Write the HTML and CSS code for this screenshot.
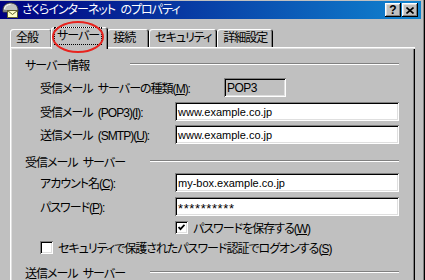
FILE: index.html
```html
<!DOCTYPE html>
<html lang="ja">
<head>
<meta charset="utf-8">
<title>さくらインターネット のプロパティ</title>
<link rel="stylesheet" href="styles.css">
</head>
<body>
<div class="window">
  <div class="titlebar">
    <svg class="app-icon" width="17" height="16" viewBox="0 0 17 16">
      <path d="M1 8 C1 3 5 1 8.5 1 C12 1 16 3 16 8 L16 10 L1 10 Z" fill="#c0c0c0" stroke="#404040" stroke-width="1"/>
      <path d="M2.5 7 C3 4 5.5 2.5 8.5 2.5" fill="none" stroke="#ffffff" stroke-width="1"/>
      <rect x="1.5" y="8" width="14" height="2" fill="#808080"/>
      <rect x="5.5" y="8.5" width="10" height="7" fill="#ffffc8" stroke="#606030" stroke-width="1"/>
      <path d="M5.5 8.5 L10.5 12.5 L15.5 8.5" fill="none" stroke="#606030" stroke-width="1"/>
    </svg>
    <span class="title">さくらインターネット のプロパティ</span>
    <div class="tb-buttons">
      <span class="tb-btn tb-help">?</span>
      <span class="tb-btn">
        <svg width="8" height="7" viewBox="0 0 8 7"><path d="M0.5 0.5 L7.5 6.5 M7.5 0.5 L0.5 6.5" stroke="#000" stroke-width="1.6"/></svg>
      </span>
    </div>
  </div>

  <div class="client">
    <div class="tabs">
      <div class="tab">全般</div>
      <div class="tab active"><span class="focus">サーバー</span></div>
      <div class="tab">接続</div>
      <div class="tab">セキュリティ</div>
      <div class="tab">詳細設定</div>
    </div>

    <div class="panel">
      <div class="group group-short">
        <span class="group-label">サーバー情報</span>
        <span class="group-line"></span>
      </div>

      <div class="row row-1">
        <span class="label label-wide">受信メール サーバーの種類(<u>M</u>):</span>
        <span class="readonly">POP3</span>
      </div>
      <div class="row row-2">
        <span class="label">受信メール (POP3)(<u>I</u>):</span>
        <span class="field">www.example.co.jp</span>
      </div>
      <div class="row row-3">
        <span class="label">送信メール (SMTP)(<u>U</u>):</span>
        <span class="field">www.example.co.jp</span>
      </div>

      <div class="group group-2">
        <span class="group-label">受信メール サーバー</span>
        <span class="group-line"></span>
      </div>

      <div class="row row-4">
        <span class="label">アカウント名(<u>C</u>):</span>
        <span class="field">my-box.example.co.jp</span>
      </div>
      <div class="row row-5">
        <span class="label">パスワード(<u>P</u>):</span>
        <span class="field field-pw">**********</span>
      </div>

      <div class="check check-1">
        <span class="box">
          <svg width="7" height="7" viewBox="0 0 7 7"><path d="M0.5 3 L2.5 5.2 L6.5 0.8" fill="none" stroke="#000" stroke-width="1.8"/></svg>
        </span>
        <span class="check-label">パスワードを保存する(<u>W</u>)</span>
      </div>
      <div class="check check-2">
        <span class="box"></span>
        <span class="check-label">セキュリティで保護されたパスワード認証でログオンする(<u>S</u>)</span>
      </div>

      <div class="group group-3">
        <span class="group-label">送信メール サーバー</span>
        <span class="group-line"></span>
      </div>
    </div>
  </div>

  <svg class="annotation" width="425" height="280" viewBox="0 0 425 280">
    <ellipse cx="78" cy="37" rx="25" ry="15" fill="none" stroke="#e8231e" stroke-width="2"/>
  </svg>
</div>
</body>
</html>
```

FILE: styles.css
```css
html, body {
  margin: 0;
  padding: 0;
  background: #c0c0c0;
}

body {
  width: 425px;
  height: 280px;
  overflow: hidden;
  font-family: "Liberation Sans", "Noto Sans CJK JP", sans-serif;
  font-size: 12px;
  font-feature-settings: "palt";
  letter-spacing: -1px;
  word-spacing: 3px;
  color: #000;
}

.window {
  position: relative;
  width: 425px;
  height: 280px;
  box-sizing: border-box;
  padding: 1px 4px 0 0;
  background: #c0c0c0;
  box-shadow: inset -1px 0 #000, inset -2px 0 #808080;
}

/* Title bar */
.titlebar {
  height: 18px;
  display: flex;
  align-items: center;
  padding: 0 3px 0 2px;
  background: linear-gradient(to right, #000080, #1084d0);
  color: #fff;
}

.app-icon {
  flex: none;
  margin-right: 3px;
}

.title {
  flex: 1;
  line-height: 18px;
  white-space: nowrap;
}

.tb-buttons {
  display: flex;
  gap: 1px;
}

.tb-btn {
  width: 16px;
  height: 14px;
  box-sizing: border-box;
  display: flex;
  align-items: center;
  justify-content: center;
  background: #c0c0c0;
  color: #000;
  letter-spacing: 0;
  box-shadow: inset -1px -1px #000, inset 1px 1px #fff, inset -2px -2px #808080, inset 2px 2px #dfdfdf;
}

.tb-help {
  font-family: "Liberation Sans", sans-serif;
  font-weight: bold;
  font-size: 12px;
  line-height: 14px;
  padding-bottom: 1px;
}

/* Client area */
.client {
  padding: 8px 6px 0 10px;
}

.tabs {
  display: flex;
  align-items: flex-end;
  height: 20px;
  position: relative;
  z-index: 1;
}

.tab {
  height: 18px;
  min-width: 42px;
  box-sizing: border-box;
  padding: 1px 6px 0 6px;
  line-height: 16px;
  white-space: nowrap;
  background: #c0c0c0;
  border-radius: 3px 3px 0 0;
  box-shadow: inset 1px 1px #fff, inset -1px 0 #000, inset -2px 0 #808080;
}

.tab.active {
  height: 22px;
  margin: 0 -1px -2px -1px;
  padding: 0 8px 4px 5px;
  line-height: 16px;
  display: flex;
  align-items: center;
  box-shadow: inset 1px 1px #fff, inset -1px 0 #000, inset -2px 0 #808080;
  position: relative;
  z-index: 2;
}

.focus {
  outline: 1px dotted #000;
  outline-offset: 1px;
  padding: 0 1px;
  line-height: 14px;
}

/* Panel */
.panel {
  height: 240px;
  box-sizing: border-box;
  padding: 9px 16px 0 15px;
  background: #c0c0c0;
  box-shadow: inset 1px 1px #fff, inset 2px 2px #dfdfdf, inset -1px 0 #000, inset -2px 0 #808080;
}

.group {
  display: flex;
  align-items: center;
  height: 16px;
  white-space: nowrap;
}

.group-short .group-label { width: 105px; }
.group-2 .group-label,
.group-3 .group-label { width: 125px; }

.group-line {
  flex: 1;
  height: 0;
  border-top: 1px solid #808080;
  border-bottom: 1px solid #fff;
}

.group-2 { margin-top: 9px; }
.group-3 { margin-top: 9px; }

.row {
  display: flex;
  align-items: center;
  height: 19px;
  padding-left: 15px;
  white-space: nowrap;
}

.row-1 { margin-top: 6px; }
.row-2 { margin-top: 5px; }
.row-3 { margin-top: 4px; }
.row-4 { margin-top: 4px; }
.row-5 { margin-top: 5px; }

.label {
  width: 135px;
  flex: none;
}

.label-wide {
  width: 184px;
}

.field,
.readonly {
  height: 19px;
  box-sizing: border-box;
  padding: 0 3px;
  display: flex;
  align-items: center;
  font-family: "Liberation Sans", sans-serif;
  font-size: 11px;
  letter-spacing: 0;
  word-spacing: 0;
  box-shadow: inset 1px 1px #808080, inset -1px -1px #fff, inset 2px 2px #000, inset -2px -2px #dfdfdf;
}

.field {
  flex: 1;
  background: #fff;
}

.field-pw {
  font-size: 13px;
  letter-spacing: 0.6px;
  padding-top: 3px;
}

.readonly {
  width: 62px;
  background: #c0c0c0;
  font-size: 12px;
  letter-spacing: -0.5px;
}

.check {
  display: flex;
  align-items: center;
  height: 16px;
  white-space: nowrap;
}

.check-1 {
  margin-top: 3px;
  padding-left: 150px;
}

.check-2 {
  margin-top: 4px;
  padding-left: 15px;
}

.box {
  width: 13px;
  height: 13px;
  flex: none;
  box-sizing: border-box;
  display: flex;
  align-items: center;
  justify-content: center;
  background: #fff;
  margin-right: 5px;
  box-shadow: inset 1px 1px #808080, inset -1px -1px #fff, inset 2px 2px #000, inset -2px -2px #dfdfdf;
}

.annotation {
  position: absolute;
  left: 0;
  top: 0;
  pointer-events: none;
  z-index: 5;
}
```
